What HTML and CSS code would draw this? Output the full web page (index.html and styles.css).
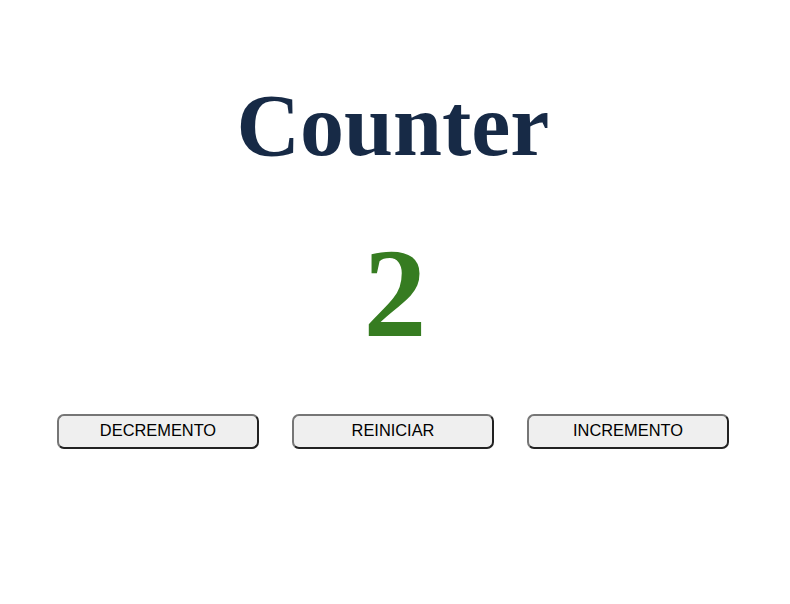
FILE: index.html
```html
<!DOCTYPE html>
<html>
<head>
<meta charset="utf-8">
<link rel="stylesheet" href="styles.css">
</head>
<body>
<main class="app">
  <h1 class="title">Counter</h1>
  <div class="count">2</div>
  <div class="controls">
    <button class="btn">DECREMENTO</button>
    <button class="btn">REINICIAR</button>
    <button class="btn">INCREMENTO</button>
  </div>
</main>
</body>
</html>
```
FILE: styles.css
```css
html, body {
  margin: 0;
  padding: 0;
  background: #fff;
}
.app {
  display: flex;
  flex-direction: column;
  align-items: center;
  padding-top: 73px;
  font-family: "Liberation Serif", serif;
}
.title {
  margin: 0;
  font-size: 88px;
  line-height: 106px;
  font-weight: bold;
  color: #172a46;
  padding-right: 4px;
}
.count {
  margin-top: 52px;
  font-size: 126px;
  line-height: 126px;
  font-weight: bold;
  color: #367c21;
}
.controls {
  margin-top: 57px;
  display: flex;
  gap: 33px;
  padding-right: 4px;
}
.btn {
  width: 202px;
  height: 35px;
  border: 2px solid #222;
  border-top-color: #767676;
  border-left-color: #767676;
  border-radius: 7px;
  background: #efefef;
  font-family: "Liberation Sans", Arial, sans-serif;
  font-size: 16.4px;
  color: #000;
  padding: 0 0 2px;
}
```
